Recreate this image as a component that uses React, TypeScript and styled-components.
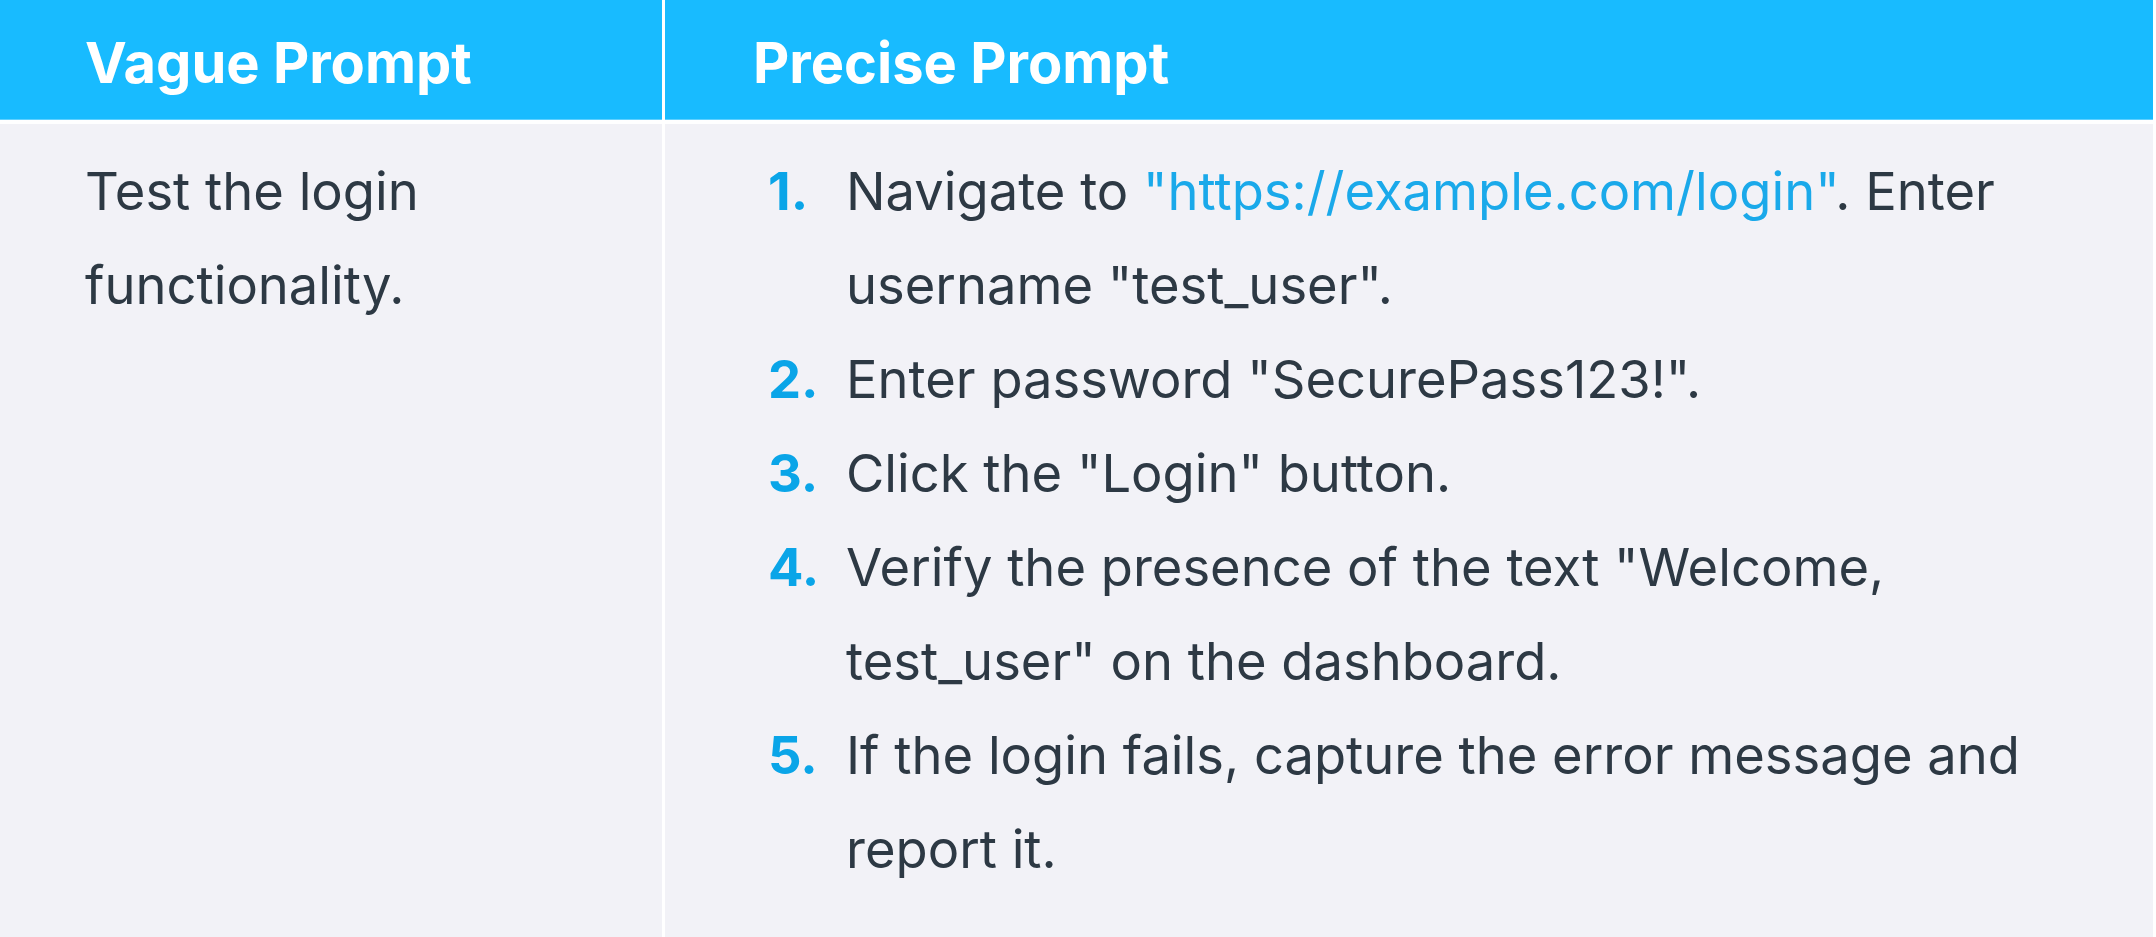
import React from "react";
import styled, { createGlobalStyle } from "styled-components";

const GlobalStyle = createGlobalStyle`
  html, body {
    margin: 0;
    padding: 0;
    background: #ffffff;
  }
  body {
    font-family: Inter, Lato, "Noto Sans", sans-serif;
  }
`;

// Table shell
const Table = styled.div`
  width: 2153px;
  height: 937px;
  display: grid;
  grid-template-columns: 662px 1fr;
  grid-template-rows: 120px 1fr;
  column-gap: 3px;
  row-gap: 4px;
  background: #ffffff;
  overflow: hidden;
`;

const HeadCell = styled.div<{ $pad: number }>`
  background: #18bbff;
  border-bottom: 1px solid #5fd0ff;
  display: flex;
  align-items: center;
  padding-left: ${(p) => p.$pad}px;
  padding-top: 6px;
  color: #ffffff;
  font-weight: 700;
  font-size: 56px;
`;

const BodyCell = styled.div<{ $pad: number }>`
  background: #f2f2f7;
  padding: 20px 40px 0 ${(p) => p.$pad}px;
  color: #2d3944;
  font-size: 52.5px;
  line-height: 94px;
`;

const Plain = styled.div`
  max-width: 500px;
`;

const Steps = styled.ol`
  margin: 0;
  padding: 0;
  list-style: none;
`;

const Step = styled.li`
  display: grid;
  grid-template-columns: 78px 1fr;
  max-width: 1330px;
`;

const Num = styled.span`
  color: #0aa5e8;
  font-weight: 700;
`;

const Link = styled.span`
  color: #1aa9ea;
`;

const steps: React.ReactNode[] = [
  <>
    Navigate to <Link>"https://example.com/login"</Link>. Enter username
    "test_user".
  </>,
  <>Enter password "SecurePass123!".</>,
  <>Click the "Login" button.</>,
  <>Verify the presence of the text "Welcome, test_user" on the dashboard.</>,
  <>If the login fails, capture the error message and report it.</>,
];

const App: React.FC = () => {
  return (
    <>
      <GlobalStyle />
      <Table>
        <HeadCell $pad={85}>Vague Prompt</HeadCell>
        <HeadCell $pad={88}>Precise Prompt</HeadCell>
        <BodyCell $pad={85}>
          <Plain>Test the login functionality.</Plain>
        </BodyCell>
        <BodyCell $pad={103}>
          <Steps>
            {steps.map((s, i) => (
              <Step key={i}>
                <Num>{i + 1}.</Num>
                <span>{s}</span>
              </Step>
            ))}
          </Steps>
        </BodyCell>
      </Table>
    </>
  );
};

export default App;
